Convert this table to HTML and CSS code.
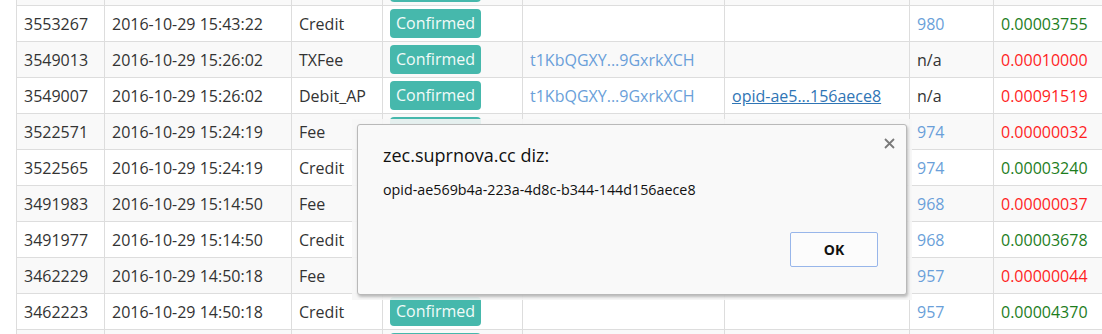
FILE: index.html
```html
<!DOCTYPE html>
<html>
<head>
<meta charset="utf-8">
<link rel="stylesheet" href="styles.css">
</head>
<body>
<div class="page">
  <table class="tx">
    <colgroup>
      <col class="c-id"><col class="c-date"><col class="c-type"><col class="c-status">
      <col class="c-addr"><col class="c-tx"><col class="c-block"><col class="c-amt">
    </colgroup>
    <tbody>
      <tr><td></td><td></td><td></td><td><span class="badge"></span></td><td></td><td></td><td></td><td></td></tr>
      <tr><td>3553267</td><td>2016-10-29 15:43:22</td><td>Credit</td><td><span class="badge">Confirmed</span></td><td></td><td></td><td class="blk">980</td><td class="pos">0.00003755</td></tr>
      <tr><td>3549013</td><td>2016-10-29 15:26:02</td><td>TXFee</td><td><span class="badge">Confirmed</span></td><td class="addr">t1KbQGXY...9GxrkXCH</td><td></td><td>n/a</td><td class="neg">0.00010000</td></tr>
      <tr><td>3549007</td><td>2016-10-29 15:26:02</td><td>Debit_AP</td><td><span class="badge">Confirmed</span></td><td class="addr">t1KbQGXY...9GxrkXCH</td><td><a class="opid" href="#">opid-ae5...156aece8</a></td><td>n/a</td><td class="neg">0.00091519</td></tr>
      <tr><td>3522571</td><td>2016-10-29 15:24:19</td><td>Fee</td><td><span class="badge"></span></td><td></td><td></td><td class="blk">974</td><td class="neg">0.00000032</td></tr>
      <tr><td>3522565</td><td>2016-10-29 15:24:19</td><td>Credit</td><td><span class="badge"></span></td><td></td><td></td><td class="blk">974</td><td class="pos">0.00003240</td></tr>
      <tr><td>3491983</td><td>2016-10-29 15:14:50</td><td>Fee</td><td><span class="badge"></span></td><td></td><td></td><td class="blk">968</td><td class="neg">0.00000037</td></tr>
      <tr><td>3491977</td><td>2016-10-29 15:14:50</td><td>Credit</td><td><span class="badge"></span></td><td></td><td></td><td class="blk">968</td><td class="pos">0.00003678</td></tr>
      <tr><td>3462229</td><td>2016-10-29 14:50:18</td><td>Fee</td><td><span class="badge"></span></td><td></td><td></td><td class="blk">957</td><td class="neg">0.00000044</td></tr>
      <tr><td>3462223</td><td>2016-10-29 14:50:18</td><td>Credit</td><td><span class="badge">Confirmed</span></td><td></td><td></td><td class="blk">957</td><td class="pos">0.00004370</td></tr>
      <tr><td></td><td></td><td></td><td><span class="badge"></span></td><td></td><td></td><td></td><td></td></tr>
    </tbody>
  </table>

  <div class="halo">
    <div class="dialog">
      <span class="close">
        <svg width="11" height="11" viewBox="0 0 11 11"><path d="M1 1 L10 10 M10 1 L1 10" stroke="#7a7a7a" stroke-width="1.8" fill="none"/></svg>
      </span>
      <div class="title">zec.suprnova.cc diz:</div>
      <div class="msg">opid-ae569b4a-223a-4d8c-b344-144d156aece8</div>
      <div class="actions"><button class="ok">OK</button></div>
    </div>
  </div>
</div>
</body>
</html>
```

FILE: styles.css
```css
html, body {
  margin: 0;
  padding: 0;
  background: #fff;
  overflow: hidden;
}
.page {
  position: relative;
  width: 1102px;
  height: 334px;
  padding-left: 16px;
  box-sizing: border-box;
  overflow: hidden;
  font-family: "Open Sans", "Noto Sans", sans-serif;
}
.tx {
  border-collapse: collapse;
  table-layout: fixed;
  width: 1107px;
  margin-top: -31px;
  font-size: 16px;
  color: #333;
}
.c-id { width: 88px; }
.c-date { width: 187px; }
.c-type { width: 91px; }
.c-status { width: 140px; }
.c-addr { width: 202px; }
.c-tx { width: 185px; }
.c-block { width: 84px; }
.c-amt { width: 130px; }
.tx td {
  border: 1px solid #ddd;
  height: 35px;
  padding: 0 7px;
  white-space: nowrap;
  vertical-align: middle;
  line-height: 20px;
}
.tx tr:nth-child(odd) td { background: #f9f9f9; }
.tx tr:nth-child(even) td { background: #fff; }
.badge {
  display: inline-block;
  box-sizing: border-box;
  width: 91px;
  text-align: center;
  background: #46b8ac;
  color: #f2fbf9;
  border-radius: 4px;
  height: 29px;
  line-height: 29px;
  vertical-align: middle;
}
.addr, .blk { color: #6a9fd9; }
.opid { color: #2f75b5; text-decoration: underline; }
.pos { color: #1d7d1d; }
.neg { color: #ff1f1f; }

.halo {
  position: absolute;
  left: 352px;
  top: 119px;
  width: 560px;
  height: 181px;
  background: rgba(246, 246, 246, 0.9);
}
.dialog {
  position: absolute;
  left: 5px;
  top: 5px;
  width: 550px;
  height: 171px;
  box-sizing: border-box;
  background: #f9f9f9;
  border: 1px solid #b9b9b9;
  border-radius: 3px;
  box-shadow: 1px 2px 3px rgba(0,0,0,0.25);
  padding: 18px 28px 27px 25px;
  display: flex;
  flex-direction: column;
}
.close {
  position: absolute;
  right: 11px;
  top: 13px;
  line-height: 0;
}
.title {
  font-size: 18px;
  color: #111;
  line-height: 24px;
}
.msg {
  margin-top: 14px;
  font-size: 14.3px;
  color: #111;
  line-height: 18px;
}
.actions {
  margin-top: auto;
  display: flex;
  justify-content: flex-end;
}
.ok {
  width: 88px;
  height: 35px;
  border: 1px solid #98b6ea;
  border-radius: 2px;
  background: #fcfcfc;
  font-family: "Open Sans", "Noto Sans", sans-serif;
  font-weight: 700;
  font-size: 14px;
  color: #111;
  padding: 0;
}
```
